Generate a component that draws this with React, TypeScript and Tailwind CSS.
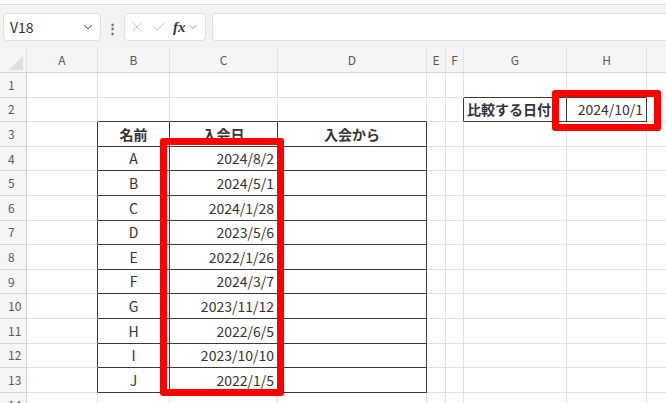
import { ChevronDown, X, Check } from "lucide-react";

const cols = ["A", "B", "C", "D", "E", "F", "G", "H", ""];

const rows: { name: string; date: string }[] = [
  { name: "A", date: "2024/8/2" },
  { name: "B", date: "2024/5/1" },
  { name: "C", date: "2024/1/28" },
  { name: "D", date: "2023/5/6" },
  { name: "E", date: "2022/1/26" },
  { name: "F", date: "2024/3/7" },
  { name: "G", date: "2023/11/12" },
  { name: "H", date: "2022/6/5" },
  { name: "I", date: "2023/10/10" },
  { name: "J", date: "2022/1/5" },
];

const grid = "grid w-[747px] grid-cols-[27px_71px_72px_108px_149px_19px_18px_103px_80px_100px]";

function Cell({
  children,
  className = "",
}: {
  children?: React.ReactNode;
  className?: string;
}) {
  return (
    <div
      className={`flex h-[24.6px] items-end overflow-visible whitespace-nowrap border-b border-r border-[#e1e1e1] pb-[1px] text-[14px] text-[#333] ${className}`}
    >
      {children}
    </div>
  );
}

export default function App() {
  const sheetRows = Array.from({ length: 14 }, (_, i) => i + 1);

  const renderRow = (r: number) => {
    const inTable = r >= 3 && r <= 13;
    const data = r >= 4 && r <= 13 ? rows[r - 4] : null;
    const dark = "!border-[#3a3a3a]";
    const aboveTable = r === 2 ? "!border-b-[#3a3a3a]" : "";
    return (
      <div key={r} className={`${grid} bg-white`}>
        <div className="flex h-[24.6px] items-center border-b border-r border-[#d4d4d4] bg-[#f5f5f5] pl-[8px] text-[12px] text-[#5a5a5a]">
          {r}
        </div>
        {/* A */}
        <Cell className={inTable ? "!border-r-[#3a3a3a]" : ""} />
        {/* B */}
        <Cell className={`justify-center ${inTable ? dark : aboveTable} ${r === 3 ? "font-bold" : ""}`}>
          {r === 3 ? "名前" : data?.name}
        </Cell>
        {/* C */}
        <Cell
          className={`${r === 3 ? "justify-center font-bold" : "justify-end pr-[3px]"} ${inTable ? dark : aboveTable}`}
        >
          {r === 3 ? "入会日" : data?.date}
        </Cell>
        {/* D */}
        <Cell className={`justify-center font-bold ${inTable ? dark : aboveTable}`}>
          {r === 3 ? "入会から" : null}
        </Cell>
        {/* E */}
        <Cell />
        {/* F */}
        <Cell className={r === 2 ? "!border-r-[#3a3a3a]" : ""} />
        {/* G */}
        <Cell className={`pl-[3px] font-bold ${r === 2 ? dark : ""} ${r === 1 ? "!border-b-[#3a3a3a]" : ""}`}>
          {r === 2 ? "比較する日付" : null}
        </Cell>
        {/* H */}
        <Cell className={`justify-end pr-[3px] ${r === 2 ? dark : ""} ${r === 1 ? "!border-b-[#3a3a3a]" : ""}`}>
          {r === 2 ? "2024/10/1" : null}
        </Cell>
        {/* I */}
        <Cell />
      </div>
    );
  };

  return (
    <div
      className="relative h-[403px] w-[666px] overflow-hidden bg-[#f3f3f3]"
      style={{ fontFamily: '"Noto Sans CJK JP", "Noto Sans", sans-serif' }}
    >
      {/* ribbon edge */}
      <div className="mx-[-4px] h-[5px] rounded-b-[6px] border-b border-[#dcdcdc] bg-white" />

      {/* formula bar */}
      <div className="flex h-[42px] items-center pl-[3px] pt-[2px]">
        <div className="flex h-[28px] w-[98px] items-center justify-between rounded-[4px] border border-[#e0e0e0] bg-white pl-[6px] pr-[5px] text-[14px] text-[#333]">
          <span>V18</span>
          <ChevronDown className="h-[14px] w-[14px] text-[#555]" strokeWidth={1.8} />
        </div>
        <div className="flex w-[23px] justify-center text-[13px] font-bold leading-none text-[#666]">⋮</div>
        <div className="flex h-[28px] w-[82px] items-center rounded-[4px] border border-[#e0e0e0] bg-white pl-[4px] text-[#bdbdbd]">
          <X className="h-[16px] w-[16px]" strokeWidth={1.3} />
          <Check className="ml-[6px] h-[16px] w-[16px]" strokeWidth={1.3} />
          <span
            className="ml-[6px] text-[15px] font-bold italic leading-none text-[#333]"
            style={{ fontFamily: '"Liberation Serif", serif' }}
          >
            fx
          </span>
          <ChevronDown className="ml-[1px] h-[12px] w-[12px] text-[#777]" strokeWidth={1.6} />
        </div>
        <div className="ml-[6px] h-[28px] flex-1 rounded-l-[4px] border border-r-0 border-[#e0e0e0] bg-white" />
      </div>

      {/* column headers */}
      <div className={`${grid} mt-[1px] h-[25px] border-b border-[#d4d4d4] bg-[#f5f5f5]`}>
        <div className="relative border-r border-[#e1e1e1]">
          <div className="absolute bottom-[2px] right-[3px] h-0 w-0 border-b-[14px] border-l-[14px] border-b-[#dedede] border-l-transparent" />
        </div>
        {cols.map((c, i) => (
          <div
            key={i}
            className="flex items-center justify-center border-r border-[#e4e4e4] text-[12px] text-[#5a5a5a]"
          >
            {c}
          </div>
        ))}
      </div>

      {/* sheet */}
      <div>{sheetRows.map(renderRow)}</div>

      {/* red highlights */}
      <div className="absolute left-[160px] top-[138px] h-[258px] w-[124px] rounded-[3px] border-[7px] border-[#ff0000]" />
      <div className="absolute left-[552px] top-[90px] h-[41px] w-[109px] rounded-[3px] border-[7px] border-[#ff0000]" />
    </div>
  );
}
